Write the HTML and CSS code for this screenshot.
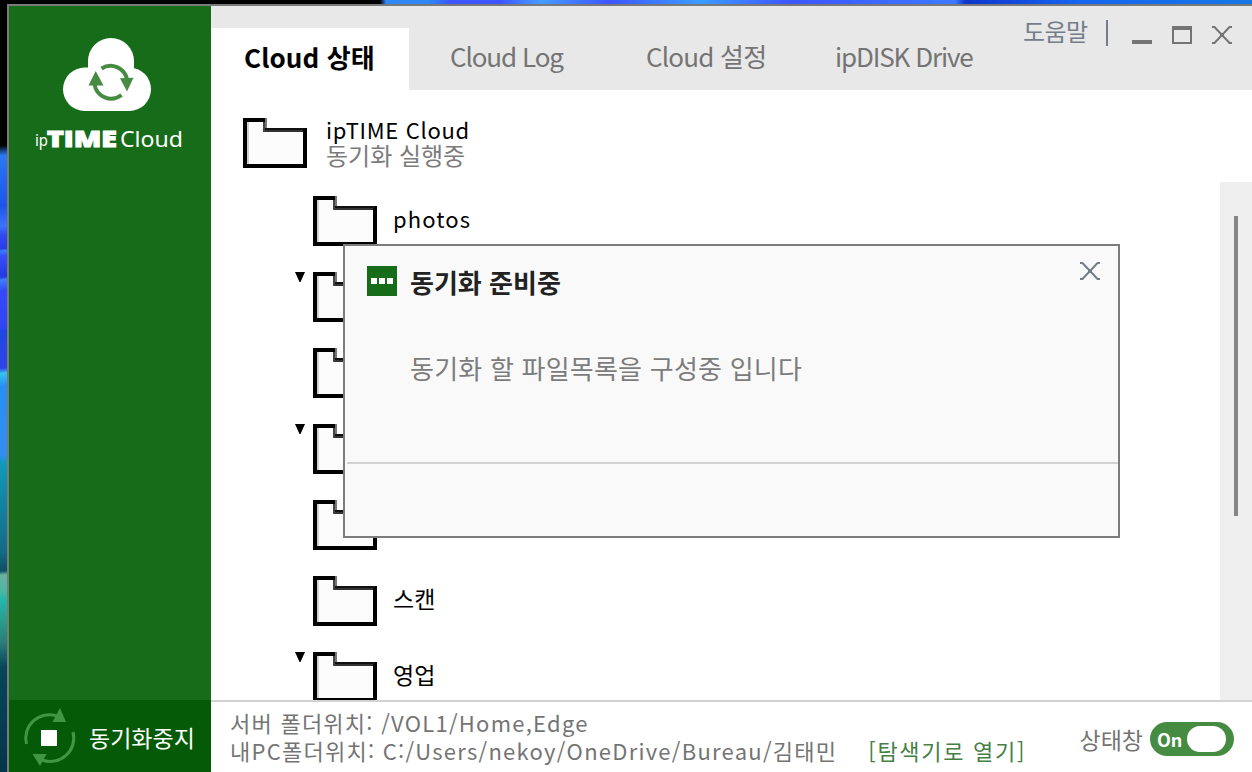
FILE: index.html
```html
<!DOCTYPE html>
<html lang="ko">
<head>
  <meta charset="UTF-8">
  <meta name="viewport" content="width=device-width, initial-scale=1.0">
  <title>ipTIME Cloud</title>
  <link rel="stylesheet" href="styles.css">
</head>
<body>
  <svg class="defs" width="0" height="0">
    <symbol id="folder" viewBox="0 0 64 50">
      <path fill="#fcfcfc" d="M4 4h18v10h38v32H4z"/>
      <path fill="#d0d0d0" d="M4 4h2v42H4z"/>
      <path fill="#000" d="M0 0h22v4H4v42h56V10h4v40H0z"/>
      <path fill="#777" d="M22 0h2v10h-2z"/>
      <path fill="#444" d="M20 4h2v10h-2z"/>
      <path fill="#111" d="M22 10h40v2H22z"/>
      <path fill="#333" d="M22 12h38v2H22z"/>
    </symbol>
    <symbol id="cross" viewBox="0 0 20 18">
      <path d="M0 1h2.500l15 16H20M20 1h-2.500l-15 16H0" fill="none" stroke="currentColor" stroke-width="2"/>
      <path d="M8 7h4v4H8z" fill="currentColor"/>
    </symbol>
  </svg>

  <div class="window">
    <aside class="sidebar">
      <svg class="logo" width="160" height="120" viewBox="0 0 160 120">
        <g fill="#fff">
          <rect x="28" y="29.500" width="88" height="43.500" rx="21.750"/>
          <path d="M53 42V23a23 23 0 0 1 46 0v19z"/>
        </g>
        <g fill="none" stroke="#458c42" stroke-width="4">
          <path d="M66.500 30.500A16.800 16.800 0 0 1 92 41"/>
          <path d="M86.500 57A16.800 16.800 0 0 1 59.500 46"/>
        </g>
        <path fill="#458c42" d="M85 40.300l13.500-.6L92 53.500zM53.500 47.500l7.200-14.500 7.800 14.500z"/>
        <g class="logo-text" fill="#fff">
          <text x="0" y="108" font-size="16" textLength="13" lengthAdjust="spacingAndGlyphs">ip</text>
          <text x="12" y="108.500" class="heavy" font-size="22" textLength="70" lengthAdjust="spacingAndGlyphs">TIME</text>
          <text x="85" y="109" font-size="22" textLength="63" lengthAdjust="spacingAndGlyphs">Cloud</text>
        </g>
      </svg>
      <button class="sync-btn">
        <svg width="54" height="58" viewBox="0 0 54 58">
          <g fill="none" stroke="#419641" stroke-width="3">
            <path d="M3.500 36A23.500 23.500 0 0 1 34 8"/>
            <path d="M50 24A23.500 23.500 0 0 1 19 52"/>
          </g>
          <path fill="#419641" d="M37 0l6 14H29.500zM9.500 46h14L17 58z"/>
          <path fill="#fff" d="M18 22h16v16H18z"/>
        </svg>
        <span>동기화중지</span>
      </button>
    </aside>

    <main class="main">
      <header class="header">
        <nav class="tabs">
          <a class="tab active">Cloud 상태</a>
          <a class="tab tab-log">Cloud Log</a>
          <a class="tab tab-set">Cloud 설정</a>
          <a class="tab tab-disk">ipDISK Drive</a>
        </nav>
        <div class="controls">
          <span class="help">도움말</span>
          <i class="sep"></i>
          <i class="min"></i>
          <i class="max"></i>
          <svg width="20" height="18"><use href="#cross"/></svg>
        </div>
      </header>

      <section class="root">
        <svg width="64" height="50"><use href="#folder"/></svg>
        <div>
          <div class="root-name">ipTIME Cloud</div>
          <div class="root-state">동기화 실행중</div>
        </div>
      </section>

      <section class="list">
        <ul class="folders">
          <li><i></i><svg width="64" height="50"><use href="#folder"/></svg><span class="en">photos</span></li>
          <li><i class="arrow"></i><svg width="64" height="50"><use href="#folder"/></svg></li>
          <li><i></i><svg width="64" height="50"><use href="#folder"/></svg></li>
          <li><i class="arrow"></i><svg width="64" height="50"><use href="#folder"/></svg></li>
          <li><i></i><svg width="64" height="50"><use href="#folder"/></svg></li>
          <li><i></i><svg width="64" height="50"><use href="#folder"/></svg><span>스캔</span></li>
          <li><i class="arrow"></i><svg width="64" height="50"><use href="#folder"/></svg><span>영업</span></li>
        </ul>
        <div class="scrollbar"><div class="thumb"></div></div>
      </section>

      <footer class="footer">
        <div class="paths">
          <div class="server">서버 폴더위치: /VOL1/Home,Edge</div>
          <div class="local"><span>내PC폴더위치: C:/Users/nekoy/OneDrive/Bureau/김태민</span><a class="open">[탐색기로 열기]</a></div>
        </div>
        <div class="status">
          <span>상태창</span>
          <div class="toggle"><b>On</b><i></i></div>
        </div>
      </footer>
    </main>
  </div>

  <div class="dialog">
    <div class="dialog-body">
      <div class="badge"><i></i><i></i><i></i></div>
      <div class="dialog-text">
        <h2>동기화 준비중</h2>
        <p>동기화 할 파일목록을 구성중 입니다</p>
      </div>
      <svg class="close" width="20" height="18"><use href="#cross"/></svg>
    </div>
    <div class="dialog-foot"></div>
  </div>
</body>
</html>
```
FILE: styles.css
```css
* { box-sizing: border-box; }
body {
  margin: 0;
  width: 1252px;
  height: 772px;
  padding: 4px 0 0 7px;
  overflow: hidden;
  position: relative;
  font-family: "Noto Sans CJK KR", sans-serif;
  font-size: 22px;
  background:
    linear-gradient(90deg, transparent 380px, #2f86f5 386px, #2f86f5 430px, #3d55fa 450px, #3d55fa 500px, #459cff 540px, #3d55fa 610px, #3c9cff 700px, #3d55fa 790px, #3c79ff 955px, #0f35cc 965px, #1665f0 1080px, #1677e5 1250px) 0 0 / 100% 4px no-repeat,
    linear-gradient(175deg, #000 145px, #2b78f4 155px, #1a55ea 205px, #3b74fa 225px, #2f48f0 235px, #2c3bea 248px, #3a80f8 250px, #3550fa 255px, #253ae0 276px, #3c80f8 279px, #3548fa 290px, #3145f5 325px, #1d48e0 330px, #2d45e5 367px, #35c5ef 372px, #288ef5 385px, #328df0 453px, #109aba 462px, #156a85 550px, #0c5063 569px, #69b3a0 573px, #4cb5a3 589px, #20b8aa 598px, #2b9a8a 620px, #2a7f79 640px, #06455a 665px, #04354a 772px) 0 0 / 7px 100% no-repeat,
    #000;
}
.defs { position: absolute; }
svg { display: block; flex: none; }
i { display: block; flex: none; }
.window {
  display: flex;
  width: 1245px;
  height: 768px;
  border: solid #7a7a7a;
  border-width: 2px 0 0 2px;
  background: #fff;
}

/* sidebar */
.sidebar {
  width: 202px;
  display: flex;
  flex-direction: column;
  justify-content: space-between;
  background: #166c18;
}
.logo { margin: 32px 0 0 26px; overflow: visible; }
.logo-text { font-family: "Noto Sans", sans-serif; }
.heavy { font-family: "Open Sans", sans-serif; font-weight: 800; stroke: #fff; stroke-width: 1; }
.sync-btn {
  display: flex;
  align-items: center;
  height: 72px;
  padding: 2px 0 0 14px;
  gap: 12px;
  border: 0;
  background: #045a06;
  color: #fff;
  font: 23px/30px "Noto Sans CJK KR", sans-serif;
}

/* header */
.main {
  flex: 1;
  display: flex;
  flex-direction: column;
}
.header {
  height: 84px;
  display: flex;
  justify-content: space-between;
  background: #e8e8e8;
  color: #747474;
}
.tabs {
  display: flex;
  padding-top: 22px;
  font-size: 26px;
  white-space: nowrap;
}
.tab { height: 62px; line-height: 56px; letter-spacing: -1.15px; }
.active {
  width: 198px;
  padding-left: 33px;
  background: #fff;
  color: #000;
  font-weight: bold;
  line-height: 58px;
  letter-spacing: .1px;
}
.tab-log { width: 197px; padding-left: 41px; }
.tab-set { width: 190px; padding-left: 40px; letter-spacing: -.8px; }
.tab-disk { padding-left: 39px; }
.controls {
  display: flex;
  align-items: flex-start;
  padding: 14px 20px 0 0;
}
.help {
  color: #747d88;
  font-size: 24px;
  line-height: 22px;
  letter-spacing: -.6px;
  width: 83px;
}
.sep { width: 2px; height: 26px; background: #747d88; }
.min { width: 20px; height: 4px; margin: 20px 0 0 24px; background: #747474; }
.max { width: 20px; height: 18px; margin: 6px 20px 0; border: 2px solid #747474; border-top-width: 4px; }
.controls svg { margin-top: 6px; }

/* folders */
.root {
  display: flex;
  gap: 19px;
  height: 92px;
  padding: 28px 0 0 32px;
}
.root-name { margin-top: -2px; line-height: 26px; letter-spacing: .7px; }
.root-state { font-size: 24px; line-height: 25px; color: #7c7c7c; }
.list {
  flex: 1;
  display: flex;
  min-height: 0;
  overflow: hidden;
}
.folders {
  flex: 1;
  margin: 0;
  padding: 14px 0 0 84px;
  list-style: none;
}
.folders li { display: flex; height: 76px; }
.folders li > i { width: 18px; }
.folders .arrow::before {
  content: "";
  display: block;
  width: 10px;
  height: 10px;
  background: #000;
  clip-path: polygon(0 0, 100% 0, 55% 100%, 45% 100%);
}
.folders span {
  margin-left: 16px;
  font-size: 23px;
  line-height: 45px;
}
.folders .en { font-size: 22px; line-height: 44px; letter-spacing: 1.1px; }
.scrollbar { width: 32px; padding: 34px 0 0 14px; background: #efefef; }
.thumb { width: 4px; height: 300px; background: #868686; }

/* footer */
.footer {
  display: flex;
  justify-content: space-between;
  height: 72px;
  border-top: 2px solid #d2d2d2;
  padding: 6px 18px 0 19px;
  color: #747474;
  white-space: nowrap;
}
.paths { line-height: 28px; letter-spacing: 1.25px; }
.local { display: flex; gap: 31px; }
.open { color: #458045; letter-spacing: 1.7px; }
.status { display: flex; gap: 7px; padding-top: 14px; line-height: 34px; font-size: 23px; }
.toggle {
  display: flex;
  align-items: center;
  width: 84px;
  height: 34px;
  padding: 0 7px;
  border-radius: 17px;
  background: #458c42;
  color: #fff;
}
.toggle b { font-size: 18px; width: 30px; }
.toggle i { width: 39px; height: 26px; border-radius: 13px; background: #fff; }

/* sync dialog */
.dialog {
  position: absolute;
  left: 343px;
  top: 244px;
  width: 777px;
  height: 294px;
  display: flex;
  flex-direction: column;
  border: 2px solid #7c7c7c;
  background: #f9f9f9;
}
.dialog-body { display: flex; flex: 1; padding: 20px 18px 0 22px; }
.badge {
  display: flex;
  justify-content: center;
  gap: 2px;
  width: 30px;
  height: 30px;
  padding-top: 12px;
  background: #166c18;
}
.badge i { width: 6px; height: 6px; background: #fff; }
.dialog-text { flex: 1; padding-left: 13px; font-size: 26px; }
.dialog-text h2 { margin: 0; font-size: 26px; line-height: 32px; color: #222; }
.dialog-text p { margin: 54px 0 0; line-height: 32px; letter-spacing: .22px; color: #7c7c7c; }
.close { margin-top: -4px; color: #747d88; }
.dialog-foot { height: 74px; margin-left: 2px; border-top: 2px solid #d2d2d2; }
```
